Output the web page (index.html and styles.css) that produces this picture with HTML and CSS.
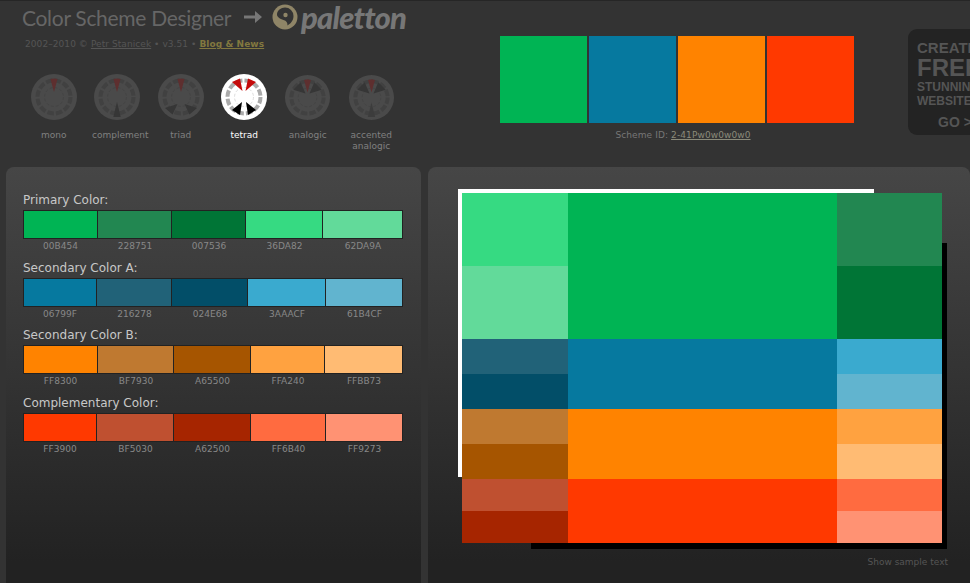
FILE: index.html
```html
<!DOCTYPE html>
<html lang="en">
<head>
    <meta charset="UTF-8">
    <meta name="viewport" content="width=device-width, initial-scale=1">
    <title>Color Scheme Designer</title>
    <link rel="stylesheet" href="styles.css">
</head>
<body>

<svg class="defs" width="0" height="0">
    <defs>
        <g id="dial">
            <circle class="dial-face" r="23"></circle>
            <circle class="dial-ring" r="16.5"></circle>
            <circle class="dial-inner" r="9.5"></circle>
        </g>
        <polygon id="wedge-top" points="0,-5 -3.5,-18 0,-18.6 3.5,-18"></polygon>
        <polygon id="wedge-bottom" points="0,5 -3.7,20 3.7,20"></polygon>
    </defs>
</svg>

<header class="top">
    <div class="brand">
        <div class="logo-row">
            <span class="old-name">Color Scheme Designer</span>
            <svg class="arrow" width="18" height="12" viewBox="0 0 18 12">
                <path d="M0 4.5h11V0l7 6-7 6V7.500H0z"></path>
            </svg>
            <svg class="logo-mark" width="26" height="26" viewBox="0 0 26 26">
                <circle cx="13" cy="13" r="12.500" fill="#8f8567"></circle>
                <path d="M13 3.500a8.500 8.500 0 0 1 8.500 8.500c0 5-3.500 8-6 9.500 0-3-1-4.500-4-5.500C8 15 5 13 5 10.500 5 6.500 9 3.500 13 3.500z" fill="#333"></path>
                <circle cx="13.500" cy="11" r="2.200" fill="#8f8567"></circle>
            </svg>
            <span class="new-name">paletton</span>
        </div>
        <p class="credits">2002–2010 © <a href="#">Petr Stanicek</a> • v3.51 • <a class="news" href="#">Blog &amp; News</a></p>

        <ul class="modes">
            <li class="mode">
                <svg class="wheel" viewBox="-24 -24 48 48"><use href="#dial"></use><use class="w-red" href="#wedge-top"></use></svg>
                <span>mono</span>
            </li>
            <li class="mode mode-wide">
                <svg class="wheel" viewBox="-24 -24 48 48"><use href="#dial"></use><use class="w-red" href="#wedge-top"></use><use class="w-dark" href="#wedge-bottom"></use></svg>
                <span>complement</span>
            </li>
            <li class="mode">
                <svg class="wheel" viewBox="-24 -24 48 48"><use href="#dial"></use><use class="w-red" href="#wedge-top"></use><polygon class="w-dark" points="-3.500,7 -16,11 -8.500,17.500"></polygon><polygon class="w-dark" points="3.500,7 16,11 8.500,17.500"></polygon></svg>
                <span>triad</span>
            </li>
            <li class="mode active">
                <svg class="wheel" viewBox="-24 -24 48 48"><use href="#dial"></use><polygon class="w-red" points="-1.500,-6 -12,-15 -4,-18.500"></polygon><polygon class="w-red" points="1.500,-6 12,-15 4,-18.500"></polygon><polygon class="w-dark" points="-2,5 -12,13 -4,18"></polygon><polygon class="w-dark" points="2,5 12,13 4,18"></polygon></svg>
                <span>tetrad</span>
            </li>
            <li class="mode">
                <svg class="wheel small" viewBox="-24 -24 48 48"><use href="#dial"></use><use class="w-red" href="#wedge-top"></use><polygon class="w-dark" points="-2,-4 -14.500,-8 -7,-15.500"></polygon><polygon class="w-dark" points="2,-4 14.500,-8 7,-15.500"></polygon></svg>
                <span>analogic</span>
            </li>
            <li class="mode">
                <svg class="wheel small" viewBox="-24 -24 48 48"><use href="#dial"></use><use class="w-red" href="#wedge-top"></use><polygon class="w-dark" points="-2,-4 -14.500,-8 -7,-15.500"></polygon><polygon class="w-dark" points="2,-4 14.500,-8 7,-15.500"></polygon><use class="w-mid" href="#wedge-bottom"></use></svg>
                <span>accented analogic</span>
            </li>
        </ul>
    </div>

    <div class="scheme">
        <div class="scheme-colors">
            <div class="scheme-color" style="background:#00B454"></div>
            <div class="scheme-color" style="background:#06799F"></div>
            <div class="scheme-color" style="background:#FF8300"></div>
            <div class="scheme-color" style="background:#FF3900"></div>
        </div>
        <p class="scheme-id">Scheme ID: <a href="#">2-41Pw0w0w0w0</a></p>
    </div>

    <div class="promo">
        <div class="promo-create">CREATE</div>
        <div class="promo-free">FREE</div>
        <div class="promo-line">STUNNING</div>
        <div class="promo-line">WEBSITES</div>
        <div class="promo-go">GO &gt;</div>
    </div>
</header>

<main class="panels">
    <section class="panel palette">
        <h3>Primary Color:</h3>
        <div class="shades shades-primary">
            <div class="shade"><div class="chip" style="background:#00B454"></div>00B454</div>
            <div class="shade"><div class="chip" style="background:#228751"></div>228751</div>
            <div class="shade"><div class="chip" style="background:#007536"></div>007536</div>
            <div class="shade"><div class="chip" style="background:#36DA82"></div>36DA82</div>
            <div class="shade"><div class="chip" style="background:#62DA9A"></div>62DA9A</div>
        </div>

        <h3>Secondary Color A:</h3>
        <div class="shades shades-a">
            <div class="shade"><div class="chip" style="background:#06799F"></div>06799F</div>
            <div class="shade"><div class="chip" style="background:#216278"></div>216278</div>
            <div class="shade"><div class="chip" style="background:#024E68"></div>024E68</div>
            <div class="shade"><div class="chip" style="background:#3AAACF"></div>3AAACF</div>
            <div class="shade"><div class="chip" style="background:#61B4CF"></div>61B4CF</div>
        </div>

        <h3>Secondary Color B:</h3>
        <div class="shades shades-b">
            <div class="shade"><div class="chip" style="background:#FF8300"></div>FF8300</div>
            <div class="shade"><div class="chip" style="background:#BF7930"></div>BF7930</div>
            <div class="shade"><div class="chip" style="background:#A65500"></div>A65500</div>
            <div class="shade"><div class="chip" style="background:#FFA240"></div>FFA240</div>
            <div class="shade"><div class="chip" style="background:#FFBB73"></div>FFBB73</div>
        </div>

        <h3>Complementary Color:</h3>
        <div class="shades shades-c">
            <div class="shade"><div class="chip" style="background:#FF3900"></div>FF3900</div>
            <div class="shade"><div class="chip" style="background:#BF5030"></div>BF5030</div>
            <div class="shade"><div class="chip" style="background:#A62500"></div>A62500</div>
            <div class="shade"><div class="chip" style="background:#FF6B40"></div>FF6B40</div>
            <div class="shade"><div class="chip" style="background:#FF9273"></div>FF9273</div>
        </div>
    </section>

    <section class="panel preview">
        <div class="sample">
            <div class="frame frame-white"></div>
            <div class="frame frame-black"></div>
            <div class="sample-grid">
                <div style="background:#36DA82"></div>
                <div class="tall" style="background:#00B454"></div>
                <div style="background:#228751"></div>
                <div style="background:#62DA9A"></div>
                <div style="background:#007536"></div>

                <div style="background:#216278"></div>
                <div class="tall" style="background:#06799F"></div>
                <div style="background:#3AAACF"></div>
                <div style="background:#024E68"></div>
                <div style="background:#61B4CF"></div>

                <div style="background:#BF7930"></div>
                <div class="tall" style="background:#FF8300"></div>
                <div style="background:#FFA240"></div>
                <div style="background:#A65500"></div>
                <div style="background:#FFBB73"></div>

                <div style="background:#BF5030"></div>
                <div class="tall" style="background:#FF3900"></div>
                <div style="background:#FF6B40"></div>
                <div style="background:#A62500"></div>
                <div style="background:#FF9273"></div>
            </div>
        </div>
        <a class="sample-toggle" href="#">Show sample text</a>
    </section>
</main>

</body>
</html>
```

FILE: styles.css
```css
body {
    margin: 0;
    height: 583px;
    overflow: hidden;
    background-color: #333;
    color: #888;
    font-family: "DejaVu Sans", sans-serif;
    font-size: 10px;
}

a {
    color: inherit;
}

.defs {
    position: absolute;
}

/* top area */
.top {
    display: flex;
    height: 166px;
    border-top: 1px solid #262626;
}

.brand {
    flex: 0 0 478px;
    padding-left: 22px;
    box-sizing: border-box;
}

.logo-row {
    display: flex;
    align-items: center;
    height: 32px;
}

.old-name {
    width: 222px;
    color: #666;
    font-family: "Lato", sans-serif;
    font-size: 21px;
    letter-spacing: -0.3px;
    white-space: nowrap;
}

.arrow {
    fill: #777;
    margin-right: 10px;
}

.new-name {
    margin-left: 3px;
    color: #777;
    font-family: "Lato", sans-serif;
    font-size: 31px;
    font-weight: 900;
    font-style: italic;
    letter-spacing: -0.8px;
    line-height: 32px;
}

.credits {
    margin: 5px 0 0 3px;
    color: #555;
    font-size: 9px;
    letter-spacing: 0.07px;
    line-height: 12px;
}

.news {
    color: #82783f;
    font-weight: bold;
}

.modes {
    display: flex;
    list-style: none;
    margin: 23px 0 0 0;
    padding: 0;
}

.mode {
    width: 63.500px;
    text-align: center;
    font-size: 9px;
    line-height: 11px;
    color: #808080;
}

.mode span {
    display: block;
    margin-top: 9px;
}

.mode-wide span {
    margin-left: 6px;
    white-space: nowrap;
}

.mode.active {
    color: #fff;
}

.wheel {
    --face: #4a4a4a;
    --ring: #414141;
    --inner: #444;
    display: block;
    width: 48px;
    height: 48px;
    margin: 0 auto;
}

.wheel.small {
    width: 47px;
    height: 47px;
    margin-top: 1px;
}

.dial-face {
    fill: var(--face);
}

.dial-ring {
    fill: none;
    stroke: var(--ring);
    stroke-width: 4;
    stroke-dasharray: 6.500 2.140;
}

.dial-inner {
    fill: none;
    stroke: var(--inner);
    stroke-width: 1;
    stroke-dasharray: 3 2;
}

.w-red {
    fill: #5e2f2f;
}

.w-dark {
    fill: #363636;
}

.w-mid {
    fill: #3c3c3c;
}

.active .wheel {
    --face: #fff;
    --ring: #aaa;
    --inner: #ddd;
}

.active .w-red {
    fill: #c40a0a;
}

.active .w-dark {
    fill: #000;
}

.scheme {
    flex: 0 0 430px;
    padding: 35px 0 0 22px;
    box-sizing: border-box;
}

.scheme-colors {
    display: flex;
    gap: 2px;
}

.scheme-color {
    width: 87px;
    height: 87px;
}

.scheme-id {
    width: 354px;
    margin: 6px 0 0 6px;
    text-align: center;
    font-size: 9px;
    letter-spacing: 0.1px;
    line-height: 12px;
    color: #777;
}

.scheme-id a {
    color: #8a8a7a;
}

.promo {
    flex: 0 0 90px;
    height: 106px;
    margin-top: 28px;
    padding: 11px 0 0 9px;
    box-sizing: border-box;
    border-radius: 9px;
    background-color: #232323;
    color: #555;
    font-family: "Liberation Sans", sans-serif;
    font-weight: bold;
    white-space: nowrap;
}

.promo-create {
    font-size: 15px;
    line-height: 16px;
}

.promo-free {
    font-size: 24px;
    line-height: 24px;
}

.promo-line {
    font-size: 12px;
    line-height: 14px;
}

.promo-go {
    margin: 6px 0 0 21px;
    font-size: 14px;
    line-height: 16px;
}

/* panels */
.panels {
    display: flex;
    gap: 7px;
    height: 416px;
    padding-left: 6px;
}

.panel {
    box-sizing: border-box;
    height: 430px;
    border-radius: 8px 8px 0 0;
    background: linear-gradient(#464646, #222 92%);
}

.palette {
    flex: 0 0 415px;
    padding: 26px 17px 0 17px;
}

.palette h3 {
    margin: 0;
    color: #c8c8c8;
    font-size: 12px;
    font-weight: normal;
    line-height: 14px;
}

.shades {
    display: grid;
    margin: 3px 0 9px 0;
    text-align: center;
    color: #888;
    font-size: 9px;
    line-height: 12px;
}

.shades-primary {
    grid-template-columns: 75px 74px 74px 77px 80px;
}

.shades-a {
    margin-bottom: 8px;
    grid-template-columns: 74px 75px 76px 78px 77px;
}

.shades-b {
    grid-template-columns: 75px 76px 77px 74px 78px;
}

.shades-c {
    grid-template-columns: 74px 77px 77px 75px 77px;
}

.chip {
    box-sizing: border-box;
    height: 29px;
    margin-bottom: 1px;
    border: 1px solid #222;
    border-left: none;
}

.shade:first-child .chip {
    border-left: 1px solid #222;
}

.preview {
    flex: 1;
    padding: 22px 0 0 30px;
}

.sample {
    position: relative;
    width: 489px;
    height: 360px;
}

.frame {
    position: absolute;
    width: 416px;
}

.frame-white {
    left: 0;
    top: 0;
    height: 288px;
    background-color: #fff;
}

.frame-black {
    left: 73px;
    top: 54px;
    height: 306px;
    background-color: #000;
}

.sample-grid {
    position: relative;
    top: 4px;
    left: 4px;
    display: grid;
    grid-template-columns: 106px 269px 105px;
    grid-template-rows: 73px 73px 35px 35px 35px 35px 32px 32px;
    width: 480px;
}

.tall {
    grid-row: span 2;
}

.sample-toggle {
    display: block;
    width: 490px;
    margin-top: 7px;
    text-align: right;
    text-decoration: none;
    color: #555;
    font-size: 9px;
    line-height: 12px;
}
```
